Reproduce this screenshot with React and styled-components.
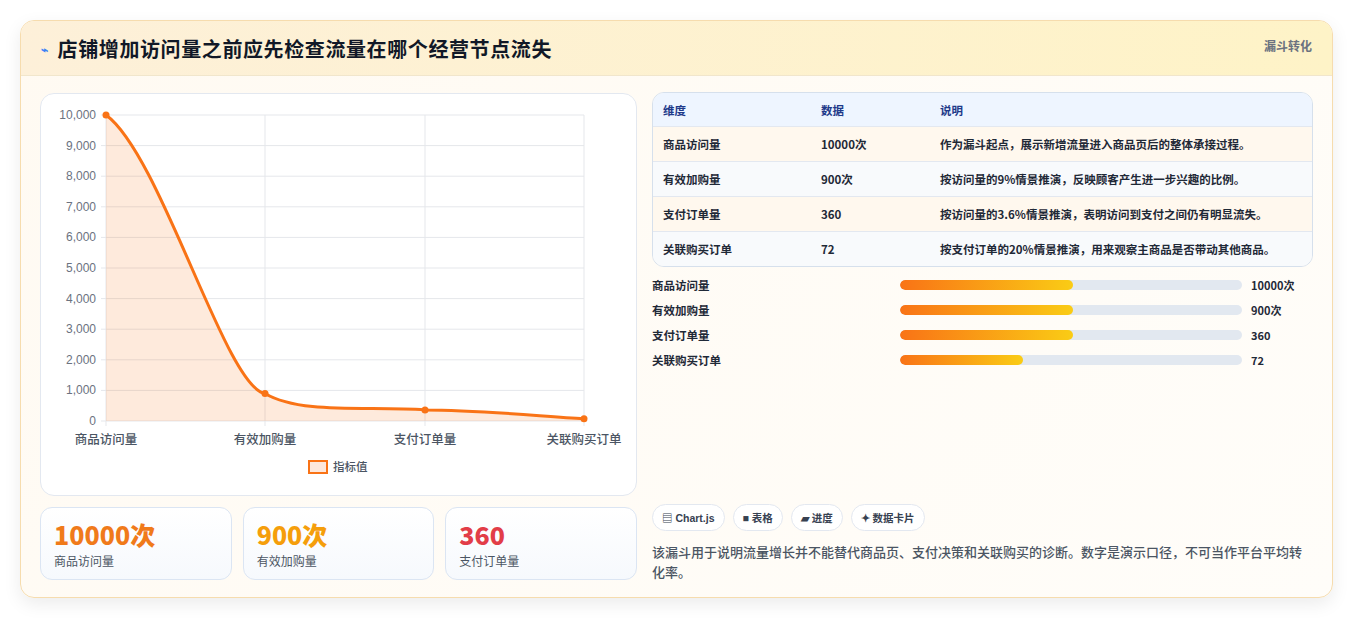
import React from "react";
import styled, { createGlobalStyle } from "styled-components";

const Global = createGlobalStyle`
  html,body{margin:0;background:#f3f4f6;}
  body{font-family:"Noto Sans CJK SC","Noto Sans",sans-serif;color:#1f2937;}
`;
const Page = styled.div`padding:20px 20px 22px 20px;background:#fff;height:579px;box-sizing:content-box;`;
const Card = styled.div`
  width:1313px;height:578px;box-sizing:border-box;border:1px solid #f6dcae;border-radius:14px;
  background:linear-gradient(135deg,#fffaf2,#fffdf9);box-shadow:0 6px 18px rgba(0,0,0,.08);overflow:hidden;
  display:flex;flex-direction:column;
`;
const Header = styled.div`
  height:55px;box-sizing:border-box;border-bottom:1px solid #f1e6cc;display:flex;justify-content:space-between;
  padding:0 20px 0 20px;background:linear-gradient(90deg,#fdf0d9,#fef3c7);
`;
const Title = styled.h1`margin:0;font-size:20px;letter-spacing:0.6px;font-weight:700;color:#111827;display:flex;align-items:center;gap:9px;height:55px;`;
const Tag = styled.div`font-size:12px;font-weight:700;color:#6b7280;padding-top:16px;`;
const Body = styled.div`display:flex;gap:15px;padding:17px 19px 0 19px;`;
const Left = styled.div`width:597px;display:flex;flex-direction:column;gap:11px;`;
const Right = styled.div`flex:1;display:flex;flex-direction:column;margin-top:-1px;`;
const ChartBox = styled.div`height:403px;box-sizing:border-box;border:1px solid #e3e8f0;border-radius:14px;background:#fff;position:relative;`;
const Stats = styled.div`display:grid;grid-template-columns:repeat(3,1fr);gap:11px;width:597px;`;
const Stat = styled.div`height:73px;box-sizing:border-box;border:1px solid #dbe5f3;border-radius:12px;background:linear-gradient(180deg,#fff,#f6f9fd);padding:10px 13px;`;
const StatNum = styled.div`font-size:25px;font-weight:800;color:${p=>p.c};line-height:32px;`;
const StatLbl = styled.div`font-size:12px;color:#4b5563;margin-top:2px;`;
const Table = styled.div`border:1px solid #d6e0ec;border-radius:12px;overflow:hidden;`;
const Row = styled.div`display:grid;grid-template-columns:158px 119px 1fr;height:${p=>p.h}px;align-items:center;padding-left:10px;font-size:11.5px;
  background:${p=>p.bg};color:${p=>p.head?"#1e3a8a":"#1f2937"};font-weight:${p=>p.head?700:600};border-top:${p=>p.first?"none":"1px solid #e3e8f0"};box-sizing:border-box;`;
const Bars = styled.div`display:flex;flex-direction:column;gap:7px;margin-top:9px;`;
const BarRow = styled.div`display:grid;grid-template-columns:248px 342px 1fr;align-items:center;height:18px;font-size:11.5px;font-weight:600;`;
const Track = styled.div`height:10px;border-radius:5px;background:#e2e8f0;overflow:hidden;`;
const Fill = styled.div`height:100%;border-radius:5px;background:linear-gradient(90deg,#f97316,#facc15);`;
const Val = styled.div`padding-left:9px;font-weight:700;font-size:11px;`;
const Chips = styled.div`display:flex;gap:8px;margin-top:135px;`;
const Chip = styled.div`height:27px;box-sizing:border-box;border:1px solid #e3e8f0;border-radius:14px;padding:0 9px;display:flex;align-items:center;gap:3px;font-size:10.5px;font-weight:700;color:#374151;background:#fff;font-family:"Liberation Sans","Noto Sans CJK SC",sans-serif;`;
const Note = styled.p`margin:11px 0 0;font-size:13px;line-height:20px;color:#4b5563;font-weight:500;padding-right:8px;`;

const xs=[65,224,384,543]; const vals=[10000,900,360,72];
const y=v=>21+(1-v/10000)*306;
const pts=xs.map((x,i)=>[x,y(vals[i])]);
const path=`M${pts[0][0]},${pts[0][1]} C 120,${y(10000)+40} 185,${y(900)-5} ${pts[1][0]},${pts[1][1]} C 260,${y(200)} 330,${y(500)} ${pts[2][0]},${pts[2][1]} C 440,${y(360)} 500,${y(150)} ${pts[3][0]},${pts[3][1]}`;

function Chart(){
  const ticks=[0,1000,2000,3000,4000,5000,6000,7000,8000,9000,10000];
  return <svg width="597" height="403" style={{display:"block"}} fontFamily="Liberation Sans, Noto Sans CJK SC, sans-serif">
    {ticks.map(t=><g key={t}><line x1="60" x2="543" y1={y(t)} y2={y(t)} stroke="#e5e7eb"/><text x="55" y={y(t)+4} textAnchor="end" fontSize="12" fill="#6b7280">{t.toLocaleString("en-US")}</text></g>)}
    {xs.map(x=><line key={x} x1={x} x2={x} y1="21" y2={y(0)+5} stroke="#e5e7eb"/>)}
    <path d={path+` L543,${y(0)} L65,${y(0)} Z`} fill="rgba(249,115,22,0.15)"/>
    <path d={path} fill="none" stroke="#f97316" strokeWidth="3"/>
    {pts.map(([a,b],i)=><circle key={i} cx={a} cy={b} r="3.5" fill="#f97316"/>)}
    {["商品访问量","有效加购量","支付订单量","关联购买订单"].map((l,i)=><text key={l} x={i===3?543:xs[i]} y="350" textAnchor="middle" fontSize="12.5" fontWeight="500" fill="#4b5563" fontFamily="Noto Sans CJK SC">{l}</text>)}
    <rect x="268" y="367" width="18" height="12" fill="#fde8dc" stroke="#f97316" strokeWidth="2"/>
    <text x="292" y="377" fontSize="11.5" fontWeight="500" fill="#4b5563" fontFamily="Noto Sans CJK SC">指标值</text>
  </svg>;
}

const rows=[["商品访问量","10000次","作为漏斗起点，展示新增流量进入商品页后的整体承接过程。"],["有效加购量","900次","按访问量的9%情景推演，反映顾客产生进一步兴趣的比例。"],["支付订单量","360","按访问量的3.6%情景推演，表明访问到支付之间仍有明显流失。"],["关联购买订单","72","按支付订单的20%情景推演，用来观察主商品是否带动其他商品。"]];

export default function App(){
  return <><Global/><Page><Card>
    <Header><Title><span style={{color:"#3b82f6",fontSize:12}}>⌁</span>店铺增加访问量之前应先检查流量在哪个经营节点流失</Title><Tag>漏斗转化</Tag></Header>
    <Body>
      <Left>
        <ChartBox><Chart/></ChartBox>
        <Stats>
          <Stat><StatNum c="#f07a1a">10000次</StatNum><StatLbl>商品访问量</StatLbl></Stat>
          <Stat><StatNum c="#f59e0b">900次</StatNum><StatLbl>有效加购量</StatLbl></Stat>
          <Stat><StatNum c="#e23d48">360</StatNum><StatLbl>支付订单量</StatLbl></Stat>
        </Stats>
      </Left>
      <Right>
        <Table>
          <Row head first h={33} bg="#eef5ff"><span>维度</span><span>数据</span><span>说明</span></Row>
          {rows.map((r,i)=><Row key={i} h={35} bg={i%2?"#f8fafc":"#fff8ee"}><span>{r[0]}</span><span>{r[1]}</span><span>{r[2]}</span></Row>)}
        </Table>
        <Bars>
          {rows.map((r,i)=><BarRow key={i}><span>{r[0]}</span><Track><Fill style={{width:i===3?"36%":"50.5%"}}/></Track><Val>{r[1]}</Val></BarRow>)}
        </Bars>
        <Chips><Chip>▤ Chart.js</Chip><Chip>■ 表格</Chip><Chip>▰ 进度</Chip><Chip>✦ 数据卡片</Chip></Chips>
        <Note>该漏斗用于说明流量增长并不能替代商品页、支付决策和关联购买的诊断。数字是演示口径，不可当作平台平均转化率。</Note>
      </Right>
    </Body>
  </Card></Page></>;
}
